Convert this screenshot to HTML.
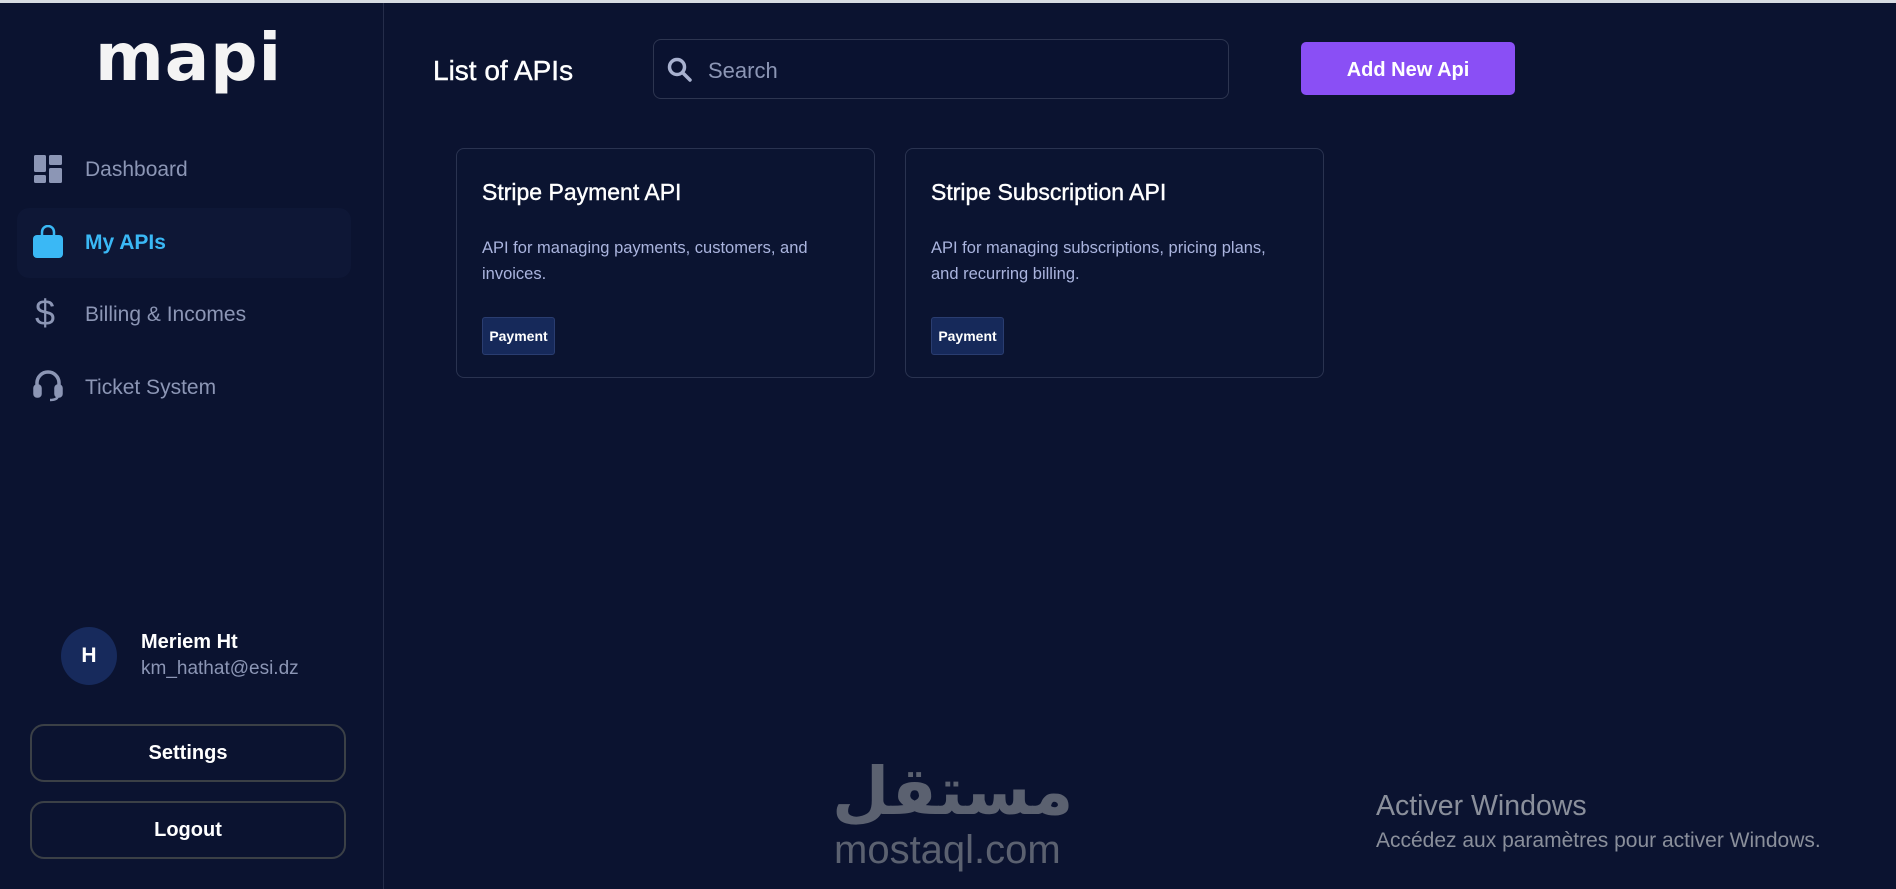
<!DOCTYPE html>
<html><head><meta charset="utf-8"><style>
*{margin:0;padding:0;box-sizing:border-box}
body{width:1896px;height:889px;background:#0b1330;font-family:"Liberation Sans",sans-serif;position:relative;overflow:hidden;color:#fff}
.abs{position:absolute}
.top{left:0;top:0;width:1896px;height:3px;background:#d8dce2}
.side{left:383px;top:3px;width:1px;height:886px;background:#252d4a}
.logo{left:95px;top:19px;font-size:66px;font-weight:bold;letter-spacing:1px;color:#f4f4f4;font-family:"DejaVu Sans",sans-serif}
.nav{left:85px;font-size:21px;color:#8c96b5}
.active{left:17px;top:208px;width:334px;height:70px;background:#0e1736;border-radius:12px}
.card{width:419px;height:230px;border:1px solid #2a3350;border-radius:8px;background:#0b1431}
.card h3{position:absolute;left:25px;top:30px;font-size:23px;font-weight:normal;color:#fff;-webkit-text-stroke:0.4px #fff}
.card p{position:absolute;left:25px;top:86px;width:360px;font-size:16.5px;line-height:26px;color:#aab4de}
.tag{position:absolute;left:25px;top:168px;width:73px;height:38px;background:#16295a;border:1px solid #2a3d70;border-radius:3px;font-size:14px;font-weight:bold;line-height:36px;text-align:center}
.btn{left:30px;width:316px;height:58px;border:2px solid #3b4046;border-radius:14px;text-align:center;line-height:54px;font-size:20px;font-weight:bold}
</style></head><body>
<div class="abs top"></div>
<div class="abs side"></div>
<div class="abs logo">mapi</div>
<div class="abs active"></div>
<svg class="abs" style="left:34px;top:155px" width="28" height="28" viewBox="0 0 28 28" fill="#8c96b5"><rect x="0" y="0" width="12" height="17" rx="1.5"/><rect x="15" y="0" width="13" height="10" rx="1.5"/><rect x="0" y="20" width="12" height="8" rx="1.5"/><rect x="15" y="13" width="13" height="15" rx="1.5"/></svg>
<svg class="abs" style="left:33px;top:225px" width="30" height="33" viewBox="0 0 30 33"><path d="M9 11V7a6 6 0 0 1 12 0v4" fill="none" stroke="#3ab8f5" stroke-width="2.5"/><rect x="0" y="10" width="30" height="23" rx="4" fill="#3ab8f5"/></svg>
<div class="abs" style="left:35px;top:292px;font-size:36px;color:#8c96b5">$</div>
<svg class="abs" style="left:33px;top:368px" width="30" height="34" viewBox="0 0 30 34" fill="none" stroke="#8c96b5" stroke-width="3.5"><path d="M4 24V15a11 11 0 0 1 22 0v9"/><rect x="2" y="18" width="5" height="10" rx="2" fill="#8c96b5"/><rect x="23" y="18" width="5" height="10" rx="2" fill="#8c96b5"/><path d="M25 27q0 5-8 5" stroke-width="2.5"/></svg>
<div class="abs nav" style="top:158px">Dashboard</div>
<div class="abs nav" style="top:231px;color:#3ab8f5;font-weight:bold">My APIs</div>
<div class="abs nav" style="top:303px">Billing &amp; Incomes</div>
<div class="abs nav" style="top:376px">Ticket System</div>
<div class="abs" style="left:61px;top:627px;width:56px;height:58px;border-radius:50%;background:#172a5c;text-align:center;line-height:58px;font-size:21px;font-weight:bold">H</div>
<div class="abs" style="left:141px;top:631px;font-size:20px;font-weight:bold">Meriem Ht</div>
<div class="abs" style="left:141px;top:658px;font-size:19px;color:#8c96b5">km_hathat@esi.dz</div>
<div class="abs btn" style="top:724px">Settings</div>
<div class="abs btn" style="top:801px">Logout</div>
<div class="abs" style="left:433px;top:55px;font-size:28px;-webkit-text-stroke:0.4px #fff">List of APIs</div>
<div class="abs" style="left:653px;top:39px;width:576px;height:60px;border:1px solid #2d3550;border-radius:8px;background:#0a1230"></div>
<svg class="abs" style="left:667px;top:57px" width="26" height="26" viewBox="0 0 26 26" fill="none" stroke="#a8b1cf" stroke-width="3.5"><circle cx="10" cy="10" r="7.5"/><path d="M15.5 15.5 23 23" stroke-linecap="round"/></svg>
<div class="abs" style="left:708px;top:58px;font-size:22px;color:#8c96b5">Search</div>
<div class="abs" style="left:1301px;top:42px;width:214px;height:53px;background:#8a4ff5;border-radius:5px;text-align:center;line-height:56px;font-size:20px;font-weight:bold">Add New Api</div>
<div class="abs card" style="left:456px;top:148px"><h3>Stripe Payment API</h3><p>API for managing payments, customers, and invoices.</p><div class="tag">Payment</div></div>
<div class="abs card" style="left:905px;top:148px"><h3>Stripe Subscription API</h3><p>API for managing subscriptions, pricing plans, and recurring billing.</p><div class="tag">Payment</div></div>
<div class="abs" style="left:832px;top:752px;font-size:66px;font-weight:bold;color:#5b6170;font-family:'DejaVu Sans',sans-serif;line-height:80px">مستقل</div>
<div class="abs" style="left:834px;top:828px;font-size:40px;color:#5b6170">mostaql.com</div>
<div class="abs" style="left:1376px;top:790px;font-size:28.5px;color:#8a8f9b">Activer Windows</div>
<div class="abs" style="left:1376px;top:829px;font-size:21px;color:#8a8f9b">Accédez aux paramètres pour activer Windows.</div>
</body></html>
